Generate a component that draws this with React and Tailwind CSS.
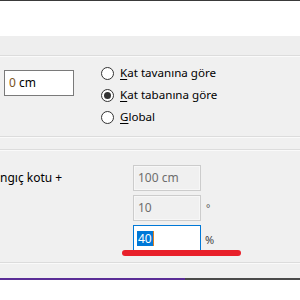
import React from "react";

const Radio = ({ checked, hotkey, rest }) => (
  <div className="flex items-center h-[22px]">
    <span className="w-[13px] h-[13px] rounded-full border border-[#333333] bg-white flex items-center justify-center">
      {checked && <span className="w-[7px] h-[7px] rounded-full bg-[#333333]" />}
    </span>
    <span className="ml-[6px] text-[11.6px] text-black leading-none">
      <span className="underline underline-offset-2">{hotkey}</span>
      {rest}
    </span>
  </div>
);

const DisabledField = ({ value }) => (
  <div className="w-[68px] h-[26px] border border-[#cccccc] bg-[#f0f0f0] shadow-[inset_0_0_0_1px_#f7f7f7] flex items-center pl-[4px] text-[12px] text-[#6d6d6d]">
    {value}
  </div>
);

const App = () => {
  return (
    <div className="w-[300px] h-[300px] overflow-hidden bg-white flex flex-col font-['Noto_Sans',sans-serif] relative">
      <div className="h-px bg-[#3a3a3a] shrink-0" />
      <div className="h-[35px] bg-white shrink-0" />

      <div className="h-[242px] bg-[#f0f0f0] flex flex-col shrink-0">
        <div className="h-[19px] bg-[#eeeeee]" />

        {/* grup 1 */}
        <div className="h-[81px] border-t border-[#dcdcdc] shadow-[inset_0_1px_0_#fafafa] flex items-start">
          <div className="mt-[14px] ml-[4px] w-[70px] h-[26px] border border-[#7a7a7a] bg-white flex items-center pl-[4px] text-[12px] text-black">
            <span className="text-[#7a5222]">0</span>&nbsp;cm
          </div>
          <div className="mt-[6px] ml-[27px] flex flex-col">
            <Radio hotkey="K" rest="at tavanına göre" />
            <Radio checked hotkey="K" rest="at tabanına göre" />
            <Radio hotkey="G" rest="lobal" />
          </div>
        </div>

        <div className="h-[13px] border-t border-[#dcdcdc] shadow-[inset_0_1px_0_#fafafa]" />

        {/* grup 2 */}
        <div className="h-[113px] border-t border-[#dcdcdc] shadow-[inset_0_1px_0_#fafafa] flex items-start pt-[15px]">
          <div className="w-[133px] h-[26px] flex items-center text-[12px] text-black">
            ngıç kotu +
          </div>
          <div className="flex flex-col gap-[4px]">
            <DisabledField value="100 cm" />
            <div className="flex items-center">
              <DisabledField value="10" />
              <span className="ml-[5px] text-[10px] text-[#555555]">°</span>
            </div>
            <div className="flex items-center">
              <div className="w-[68px] h-[26px] border border-[#0078d7] bg-white flex items-center pl-[3px] text-[12px]">
                <span className="bg-[#0078d7] text-white px-px leading-[15px]">40</span>
                <span className="w-px h-[15px] bg-[#e08020]" />
              </div>
              <span className="ml-[4px] mt-[4px] text-[11px] text-[#444444]">%</span>
            </div>
          </div>
        </div>

        <div className="flex-1 border-t border-[#dcdcdc] shadow-[inset_0_1px_0_#fafafa]" />
      </div>

      <div className="h-[2px] flex shrink-0">
        <div className="w-[185px] bg-[#5a2d96]" />
        <div className="flex-1 bg-[#4a4a4a]" />
      </div>
      <div className="flex-1 bg-white" />

      <div className="absolute left-[122px] top-[250px] w-[119px] h-[6px] rounded-full bg-[#e8202a]" />
    </div>
  );
};

export default App;
